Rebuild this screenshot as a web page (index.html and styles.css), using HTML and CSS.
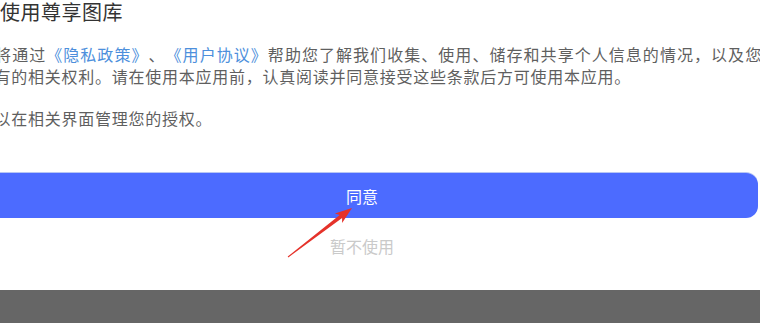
FILE: index.html
```html
<!DOCTYPE html>
<html lang="zh-CN">
<head>
  <meta charset="UTF-8" />
  <title>欢迎使用尊享图库</title>
  <link rel="stylesheet" href="styles.css">
</head>
<body>
  <div class="sheet">
    <h1 class="title">欢迎使用尊享图库</h1>
    <p class="intro">我们将通过<a href="#">《隐私政策》</a>、<a href="#">《用户协议》</a>帮助您了解我们收集、使用、储存和共享个人信息的情况，以及您依法享有的相关权利。请在使用本应用前，认真阅读并同意接受这些条款后方可使用本应用。</p>
    <p class="intro">您可以在相关界面管理您的授权。</p>
    <button type="button" class="agree-btn">同意</button>
    <div class="skip">暂不使用</div>
  </div>
  <div class="bottom-bar"></div>

  <!-- 标注箭头 -->
  <svg class="mark-arrow" width="80" height="65" viewBox="0 0 80 65">
    <polygon points="72,8 62.1,23.1 62.1,18.1 8.3,57.4 7.7,56.6 59.7,14.9 54.9,13.5" fill="#e5322a" />
  </svg>
</body>
</html>
```

FILE: styles.css
```css
html, body {
  margin: 0;
  padding: 0;
  overflow: hidden;
}
body {
  font-family: 'Noto Sans CJK SC', 'Noto Sans', sans-serif;
  background-color: white;
  color: #666;
  position: relative;
  text-spacing-trim: space-all;
}
.sheet {
  width: 860px;
  margin-left: -39px;
  padding-bottom: 33px;
}
.title {
  margin: 0 0 0 -2px;
  font-size: 20px;
  font-weight: normal;
  line-height: 24px;
  letter-spacing: 0.5px;
  color: #333;
}
.intro {
  width: 818px;
  margin: 20px 0 0;
  font-size: 16px;
  line-height: 21.5px;
  letter-spacing: 0.75px;
  text-align: justify;
  color: #5f5f5f;
}
.intro + .intro {
  margin-top: 20.5px;
}
.intro a {
  color: #4d8fdc;
  text-decoration: none;
}
.agree-btn {
  display: block;
  width: 792px;
  height: 45px;
  margin: 44px 0 0 5px;
  padding: 0;
  background-color: #4c6bff;
  color: white;
  border: none;
  border-radius: 12px;
  box-shadow: 0 -1px 0 #b7c6f4;
  font-family: inherit;
  font-size: 16px;
  cursor: pointer;
}
.skip {
  width: 792px;
  margin: 17px 0 0 5px;
  font-size: 16px;
  line-height: 22px;
  text-align: center;
  color: #cacaca;
}
.bottom-bar {
  height: 33px;
  background-color: #666;
}
.mark-arrow {
  position: absolute;
  left: 280px;
  top: 200px;
}
```
